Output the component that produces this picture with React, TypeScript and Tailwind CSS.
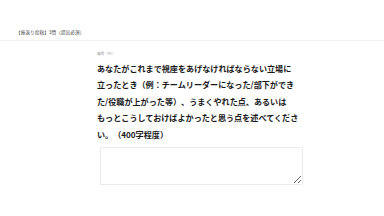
import React from 'react';

const font = { fontFamily: '"Noto Sans CJK JP", "Liberation Sans", sans-serif' };

const App: React.FC = () => {
  return (
    <div className="w-[384px] h-[216px] bg-white overflow-hidden [text-spacing-trim:space-all]" style={font}>
      {/* Header */}
      <div className="h-[41px] flex items-end border-b border-[#f2f2f2] px-4 pb-[5px]">
        <p className="text-[4.6px] leading-none text-[#444] tracking-[0.1px]">【振返り投稿】3問（提出必須）</p>
      </div>

      {/* Question */}
      <div className="pl-[97px] pt-[11px]">
        <p className="text-[3.6px] leading-none text-[#999]">質問（中）</p>
        <p className="mt-[5px] w-[215px] text-[8.1px] leading-[16.6px] font-bold text-[#1a1a1a] whitespace-nowrap">
          あなたがこれまで視座をあげなければならない立場に<br />
          立ったとき（例：チームリーダーになった/部下ができ<br />
          た/役職が上がった等）、うまくやれた点、あるいは<br />
          もっとこうしておけばよかったと思う点を述べてくださ<br />
          い。（400字程度）
        </p>
        <textarea
          className="block mt-[3px] ml-[3px] w-[203px] h-[38px] border border-[#ebebeb] rounded-[1px] outline-none resize"
        />
      </div>
    </div>
  );
};

export default App;
